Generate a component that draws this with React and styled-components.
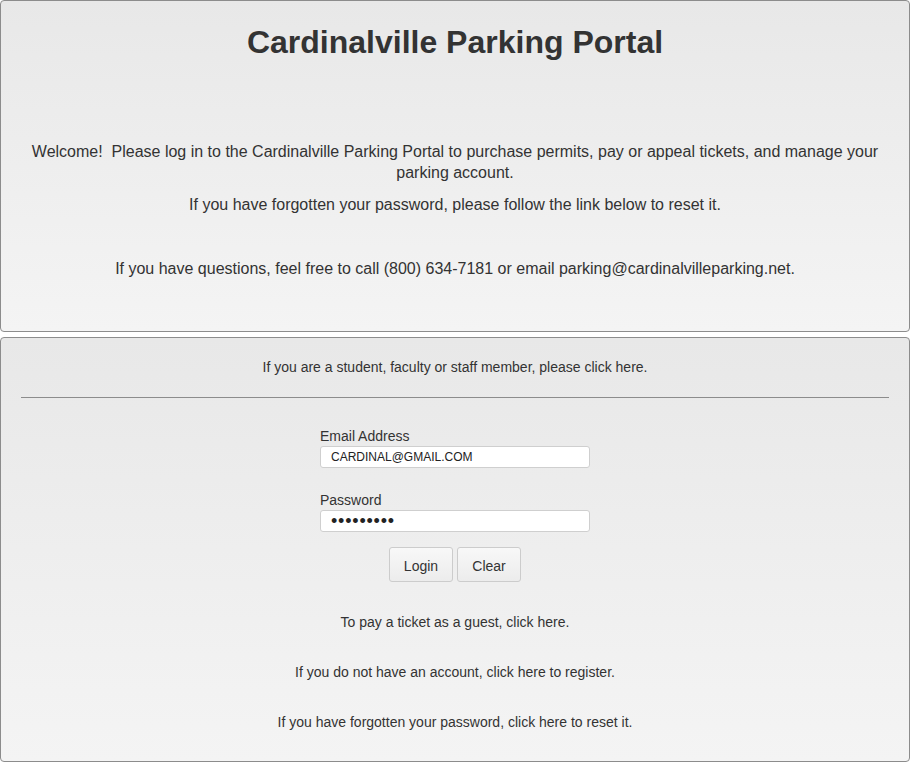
import React from "react";
import styled, { createGlobalStyle } from "styled-components";

const Global = createGlobalStyle`
  html, body { margin: 0; padding: 0; background: #fff; }
  body { font-family: "Liberation Sans", Arial, sans-serif; color: #333; }
`;

const Page = styled.div`
  width: 910px;
  display: flex;
  flex-direction: column;
  gap: 5px;
`;

const Panel = styled.section`
  box-sizing: border-box;
  height: ${(p) => p.h}px;
  border: 1px solid #8c8c8c;
  border-radius: 4px;
  background: linear-gradient(to bottom, #e8e8e8, #f4f4f4);
  padding: ${(p) => p.pad};
  text-align: center;
`;

const Title = styled.h1`
  margin: 0 0 80px;
  font-size: 32px;
  line-height: 38px;
  font-weight: bold;
  color: #333;
`;

const Intro = styled.p`
  margin: 0 0 ${(p) => p.mb || 0}px;
  font-size: 16px;
  line-height: 21px;
  color: #333;
`;

const Small = styled.p`
  margin: 0 0 ${(p) => p.mb || 0}px;
  font-size: 14px;
  line-height: 18px;
  color: #333;
`;

const Rule = styled.hr`
  border: 0;
  border-top: 1px solid #8c8c8c;
  margin: 21px 0 29px;
`;

const Form = styled.form`
  width: 270px;
  margin: 0 auto;
  text-align: left;
`;

const Label = styled.label`
  display: block;
  font-size: 14px;
  line-height: 18px;
  margin: ${(p) => p.mt || 0}px 0 1px;
`;

const Input = styled.input`
  box-sizing: border-box;
  display: block;
  width: 270px;
  height: 22px;
  border: 1px solid #cfcfcf;
  border-radius: 3px;
  background: #fff;
  padding: 0 10px;
  font-family: "Liberation Sans", Arial, sans-serif;
  font-size: ${(p) => (p.type === "password" ? "18px" : "12px")};
  color: #222;
  outline: none;
  letter-spacing: ${(p) => (p.type === "password" ? "0.8px" : "0")};
`;

const Buttons = styled.div`
  display: flex;
  justify-content: center;
  gap: 4px;
  margin: 15px 0 31px;
`;

const Button = styled.button`
  box-sizing: border-box;
  width: 64px;
  height: 35px;
  border: 1px solid #cccccc;
  border-radius: 3px;
  background: linear-gradient(to bottom, #f8f8f8, #ececec);
  font-family: "Liberation Sans", Arial, sans-serif;
  font-size: 14px;
  color: #333;
  padding: 2px 0 0;
`;

export default function App() {
  return (
    <Page>
      <Global />
      <Panel h={332} pad="22px 20px 0">
        <Title>Cardinalville Parking Portal</Title>
        <Intro mb={11}>
          Welcome!&nbsp; Please log in to the Cardinalville Parking Portal to purchase permits, pay or appeal tickets, and manage your parking account.
        </Intro>
        <Intro mb={43}>If you have forgotten your password, please follow the link below to reset it.</Intro>
        <Intro>If you have questions, feel free to call (800) 634-7181 or email parking@cardinalvilleparking.net.</Intro>
      </Panel>
      <Panel h={425} pad="20px 20px 0">
        <Small>If you are a student, faculty or staff member, please click here.</Small>
        <Rule />
        <Form onSubmit={(e) => e.preventDefault()}>
          <Label>Email Address</Label>
          <Input type="text" defaultValue="CARDINAL@GMAIL.COM" />
          <Label mt={23}>Password</Label>
          <Input type="password" defaultValue="cardinal1" />
        </Form>
        <Buttons>
          <Button type="button">Login</Button>
          <Button type="button">Clear</Button>
        </Buttons>
        <Small mb={32}>To pay a ticket as a guest, click here.</Small>
        <Small mb={32}>If you do not have an account, click here to register.</Small>
        <Small>If you have forgotten your password, click here to reset it.</Small>
      </Panel>
    </Page>
  );
}
